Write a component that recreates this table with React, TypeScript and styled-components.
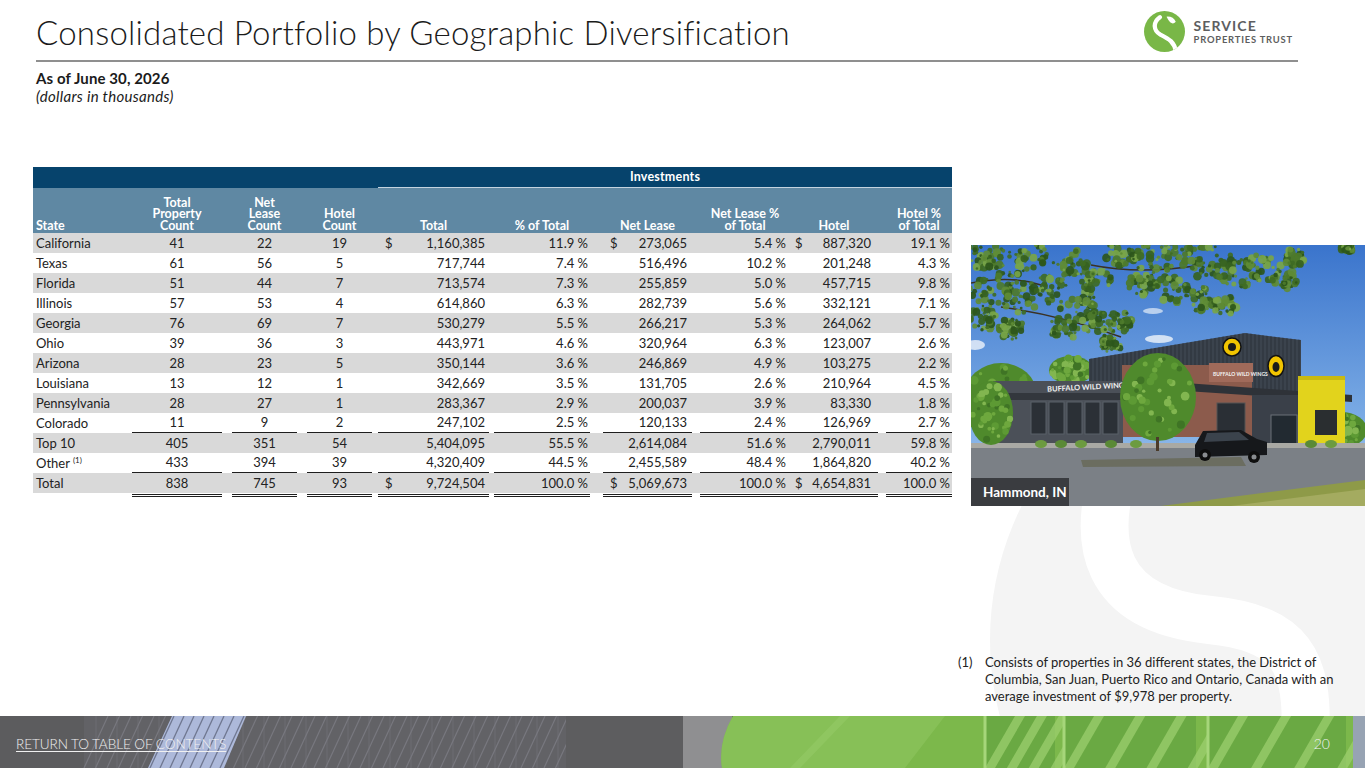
import React from "react";
import styled, { createGlobalStyle } from "styled-components";

const GlobalStyle = createGlobalStyle`
  html, body { margin: 0; padding: 0; background: #ffffff; }
  body { font-family: Lato, "Noto Sans", "Liberation Sans", sans-serif; color: #222; }
  * { box-sizing: border-box; }
`;

type Kind = "text" | "center" | "right" | "money";
type Col = { w: number; ml: number; mr: number; pl: number; pr: number; kind: Kind };

const COLS: Col[] = [
  { w: 97, ml: 0, mr: 0, pl: 3, pr: 0, kind: "text" },
  { w: 97, ml: 2, mr: 5, pl: 0, pr: 0, kind: "center" },
  { w: 75, ml: 5, mr: 5, pl: 0, pr: 0, kind: "center" },
  { w: 73, ml: 5, mr: 3, pl: 0, pr: 0, kind: "center" },
  { w: 116.5, ml: 3, mr: 2.5, pl: 7, pr: 4, kind: "money" },
  { w: 105, ml: 2.5, mr: 6.5, pl: 0, pr: 2, kind: "right" },
  { w: 99.5, ml: 6.5, mr: 4, pl: 7, pr: 5, kind: "money" },
  { w: 94, ml: 4, mr: 0, pl: 0, pr: 4, kind: "right" },
  { w: 92, ml: 0, mr: 4, pl: 5, pr: 7, kind: "money" },
  { w: 70, ml: 4, mr: 0, pl: 0, pr: 2, kind: "right" },
];
const TEMPLATE = COLS.map((c) => `${c.w}px`).join(" ");

const HEADERS = [
  "State",
  "Total\nProperty\nCount",
  "Net\nLease\nCount",
  "Hotel\nCount",
  "Total",
  "% of Total",
  "Net Lease",
  "Net Lease %\nof Total",
  "Hotel",
  "Hotel %\nof Total",
];

type RowData = { name: string; sup?: string; v: string[]; dollar?: boolean; line: "none" | "single" | "double" };

const ROWS: RowData[] = [
  { name: "California", v: ["41", "22", "19", "1,160,385", "11.9 %", "273,065", "5.4 %", "887,320", "19.1 %"], dollar: true, line: "none" },
  { name: "Texas", v: ["61", "56", "5", "717,744", "7.4 %", "516,496", "10.2 %", "201,248", "4.3 %"], line: "none" },
  { name: "Florida", v: ["51", "44", "7", "713,574", "7.3 %", "255,859", "5.0 %", "457,715", "9.8 %"], line: "none" },
  { name: "Illinois", v: ["57", "53", "4", "614,860", "6.3 %", "282,739", "5.6 %", "332,121", "7.1 %"], line: "none" },
  { name: "Georgia", v: ["76", "69", "7", "530,279", "5.5 %", "266,217", "5.3 %", "264,062", "5.7 %"], line: "none" },
  { name: "Ohio", v: ["39", "36", "3", "443,971", "4.6 %", "320,964", "6.3 %", "123,007", "2.6 %"], line: "none" },
  { name: "Arizona", v: ["28", "23", "5", "350,144", "3.6 %", "246,869", "4.9 %", "103,275", "2.2 %"], line: "none" },
  { name: "Louisiana", v: ["13", "12", "1", "342,669", "3.5 %", "131,705", "2.6 %", "210,964", "4.5 %"], line: "none" },
  { name: "Pennsylvania", v: ["28", "27", "1", "283,367", "2.9 %", "200,037", "3.9 %", "83,330", "1.8 %"], line: "none" },
  { name: "Colorado", v: ["11", "9", "2", "247,102", "2.5 %", "120,133", "2.4 %", "126,969", "2.7 %"], line: "single" },
  { name: "Top 10", v: ["405", "351", "54", "5,404,095", "55.5 %", "2,614,084", "51.6 %", "2,790,011", "59.8 %"], line: "none" },
  { name: "Other", sup: "(1)", v: ["433", "394", "39", "4,320,409", "44.5 %", "2,455,589", "48.4 %", "1,864,820", "40.2 %"], line: "single" },
  { name: "Total", v: ["838", "745", "93", "9,724,504", "100.0 %", "5,069,673", "100.0 %", "4,654,831", "100.0 %"], dollar: true, line: "double" },
];

/* ---------- page ---------- */

const Page = styled.div`
  position: relative;
  z-index: 0;
  width: 1365px;
  height: 768px;
  overflow: hidden;
  background: #fff;
  display: flex;
  flex-direction: column;
`;

const Watermark = styled.svg`
  position: absolute;
  z-index: -1;
  left: 960px;
  top: 320px;
  width: 680px;
  height: 680px;
`;

const TitleBar = styled.header`
  display: flex;
  justify-content: space-between;
  align-items: flex-start;
  padding: 12px 72px 0 36px;
`;

const Title = styled.h1`
  margin: 0;
  font-family: Lato, "Noto Sans", sans-serif;
  font-weight: 300;
  font-size: 33px;
  line-height: 40px;
  color: #1b1b1b;
  letter-spacing: 0.2px;
`;

const Logo = styled.div`
  display: flex;
  align-items: center;
  gap: 9px;
  margin-top: -1px;
`;

const LogoMark = styled.svg`
  width: 41px;
  height: 41px;
  display: block;
`;

const LogoText = styled.div`
  display: flex;
  flex-direction: column;
  color: #5d5e60;
  font-family: Lato, "Noto Sans", sans-serif;
  font-weight: 700;
  margin-top: 1px;
`;

const LogoLine1 = styled.span`
  font-size: 14px;
  line-height: 14px;
  letter-spacing: 1.1px;
`;

const LogoLine2 = styled.span`
  font-size: 9.4px;
  line-height: 13px;
  letter-spacing: 0.8px;
`;

const Rule = styled.div`
  height: 2px;
  margin: 8px 67px 0 36px;
  background: #8f8f8f;
`;

const Sub = styled.div`
  padding: 8px 0 0 36px;
  font-size: 15px;
  line-height: 17.5px;
  color: #1b1b1b;
`;

const AsOf = styled.div`
  font-weight: 700;
  letter-spacing: 0.1px;
`;

const Units = styled.div`
  font-style: italic;
  letter-spacing: 0.3px;
`;

const Main = styled.main`
  flex: 1;
  display: flex;
  min-height: 0;
`;

const TableWrap = styled.section`
  width: 919px;
  margin-left: 33px;
  padding-top: 62px;
  font-size: 13px;
  color: #222;
`;

const GridRow = styled.div`
  display: grid;
  grid-template-columns: ${TEMPLATE};
`;

const HeadTop = styled(GridRow)`
  height: 21px;
  background: #06436c;
`;

const Investments = styled.div`
  grid-column: 5 / 11;
  margin-left: 3px;
  height: 21px;
  border-bottom: 1px solid #c3d3df;
  color: #fff;
  font-weight: 700;
  font-size: 12.5px;
  line-height: 20px;
  letter-spacing: 0.2px;
  text-align: center;
`;

const HeadRow = styled(GridRow)`
  height: 45px;
  background: #5f88a3;
`;

const HeadCell = styled.div<{ $ml: number; $mr: number; $pl: number; $left: boolean }>`
  align-self: end;
  margin: 0 ${(p) => p.$mr}px 0 ${(p) => p.$ml}px;
  padding: 0 0 2px ${(p) => p.$pl}px;
  color: #fff;
  font-weight: 700;
  font-size: 12.5px;
  line-height: 11.5px;
  white-space: pre-line;
  text-align: ${(p) => (p.$left ? "left" : "center")};
`;

const BodyRow = styled(GridRow)<{ $shade: boolean; $tall: boolean }>`
  height: ${(p) => (p.$tall ? 24 : 20)}px;
  background: ${(p) => (p.$shade ? "linear-gradient(#d9d9d9, #d9d9d9) 0 0 / 100% 20px no-repeat" : "transparent")};
`;

const Cell = styled.div<{
  $ml: number;
  $mr: number;
  $pl: number;
  $pr: number;
  $kind: Kind;
  $line: "none" | "single" | "double";
  $tall: boolean;
}>`
  display: flex;
  align-items: center;
  justify-content: ${(p) =>
    p.$kind === "text" ? "flex-start" : p.$kind === "center" ? "center" : p.$kind === "money" ? "space-between" : "flex-end"};
  margin: 0 ${(p) => p.$mr}px 0 ${(p) => p.$ml}px;
  padding: 0 ${(p) => p.$pr}px ${(p) => (p.$tall ? (p.$line === "double" ? 1 : 4) : 0)}px ${(p) => p.$pl}px;
  height: ${(p) => (p.$tall ? 24 : 20)}px;
  border-bottom: ${(p) =>
    p.$line === "single" ? "1px solid #1e1e1e" : p.$line === "double" ? "3px double #1e1e1e" : "0"};
  white-space: nowrap;
  line-height: 19px;
`;

const Sup = styled.sup`
  font-size: 8px;
  line-height: 0;
  margin-left: 3px;
  vertical-align: 5px;
`;

const Aside = styled.aside`
  flex: 1;
  margin-left: 6px;
  display: flex;
  flex-direction: column;
  padding-top: 140px;
  padding-bottom: 11px;
`;

const Photo = styled.div`
  position: relative;
  margin-left: 13px;
  height: 261px;
  overflow: hidden;
`;

const PhotoArt = styled.svg`
  display: block;
  width: 100%;
  height: 100%;
`;

const PhotoLabel = styled.div`
  position: absolute;
  left: 0;
  bottom: 0;
  width: 98px;
  height: 28px;
  background: rgba(52, 54, 59, 0.92);
  color: #fff;
  font-weight: 700;
  font-size: 13.5px;
  line-height: 28px;
  padding-left: 12px;
`;

const Footnote = styled.div`
  margin-top: auto;
  display: flex;
  font-size: 13px;
  line-height: 17px;
  color: #222;
`;

const NoteNum = styled.span`
  width: 27px;
  flex: none;
`;

const NoteText = styled.span`
  max-width: 362px;
`;

const Footer = styled.footer`
  position: relative;
  height: 52px;
  flex: none;
  display: flex;
  align-items: center;
  justify-content: space-between;
  padding: 3px 35px 0 16px;
`;

const FooterArt = styled.svg`
  position: absolute;
  inset: 0;
  width: 100%;
  height: 100%;
  z-index: 0;
`;

const FooterLink = styled.a`
  position: relative;
  z-index: 1;
  color: #f0f0f0;
  font-size: 13.6px;
  font-weight: 300;
  text-decoration: underline;
  text-underline-offset: 2px;
  letter-spacing: -0.1px;
`;

const PageNum = styled.span`
  position: relative;
  z-index: 1;
  color: #f4f4f4;
  font-size: 14px;
  font-weight: 300;
`;

/* ---------- drawings ---------- */

function rand(seed: number) {
  let s = seed;
  return () => {
    s = (s * 9301 + 49297) % 233280;
    return s / 233280;
  };
}

const CANOPY: [number, number, number][] = [
  [8, 8, 20], [34, 18, 22], [62, 12, 18], [18, 44, 22], [50, 52, 20], [80, 44, 18], [108, 60, 20],
  [128, 80, 18], [148, 76, 14], [92, 84, 15], [40, 84, 14], [12, 74, 14], [100, 18, 18], [126, 36, 16],
  [150, 8, 16], [180, 14, 22], [210, 8, 20], [240, 18, 22], [266, 28, 20], [292, 22, 18], [312, 34, 14],
  [200, 44, 18], [230, 54, 15], [254, 60, 12], [170, 40, 14], [322, 12, 12], [376, 3, 6], [140, 100, 10],
];
const LEAF = ["#2d561b", "#36621f", "#3f6b24", "#4d7a2b", "#5f8c36", "#78a548"];

function Canopy() {
  const r = rand(7);
  const out: React.ReactNode[] = [];
  CANOPY.forEach(([cx, cy, rad], i) => {
    for (let k = 0; k < 34; k++) {
      const a = r() * Math.PI * 2;
      const d = Math.sqrt(r()) * rad;
      out.push(
        <circle
          key={`${i}-${k}`}
          cx={cx + Math.cos(a) * d}
          cy={cy + Math.sin(a) * d * 0.8}
          r={1.2 + r() * 3.2}
          fill={LEAF[Math.floor(r() * LEAF.length)]}
          opacity={0.92}
        />
      );
    }
  });
  return <g>{out}</g>;
}

function Bush({ cx, cy, rx, ry, seed }: { cx: number; cy: number; rx: number; ry: number; seed: number }) {
  const r = rand(seed);
  const out: React.ReactNode[] = [];
  out.push(<ellipse key="b" cx={cx} cy={cy} rx={rx} ry={ry} fill="#4f8a2c" />);
  for (let k = 0; k < 40; k++) {
    const a = r() * Math.PI * 2;
    const d = Math.sqrt(r());
    out.push(
      <circle
        key={k}
        cx={cx + Math.cos(a) * d * rx * 0.9}
        cy={cy + Math.sin(a) * d * ry * 0.9}
        r={1.5 + r() * 3}
        fill={["#5d9a34", "#6ea83e", "#3f7425", "#82b650"][Math.floor(r() * 4)]}
      />
    );
  }
  return <g>{out}</g>;
}

function PhotoDrawing() {
  const stripes: React.ReactNode[] = [];
  for (let x = 120; x < 330; x += 4) {
    stripes.push(<line key={x} x1={x} y1={80} x2={x} y2={165} stroke="#2c333b" strokeWidth={1} />);
  }
  const mullions: React.ReactNode[] = [];
  for (let x = 60; x < 150; x += 18) {
    mullions.push(<rect key={x} x={x} y={157} width={15} height={32} fill="#2b3036" stroke="#5a6068" strokeWidth={1} />);
  }
  return (
    <PhotoArt viewBox="0 0 394 261" preserveAspectRatio="none">
      <defs>
        <linearGradient id="sky" x1="0" y1="0" x2="0" y2="1">
          <stop offset="0" stopColor="#3a74cc" />
          <stop offset="0.7" stopColor="#7eaee6" />
          <stop offset="1" stopColor="#b4d0ee" />
        </linearGradient>
        <clipPath id="metal">
          <polygon points="118,114 274,88 330,95 330,165 118,165" />
        </clipPath>
      </defs>
      <rect width="394" height="261" fill="url(#sky)" />
      <ellipse cx="188" cy="94" rx="14" ry="4" fill="#e6eef8" opacity="0.85" />
      <ellipse cx="4" cy="100" rx="10" ry="5" fill="#eef3fa" opacity="0.8" />
      <ellipse cx="182" cy="66" rx="10" ry="3" fill="#e6eef8" opacity="0.7" />
      {/* background trees */}
      <Bush cx={30} cy={150} rx={36} ry={32} seed={3} />
      <Bush cx={100} cy={125} rx={22} ry={14} seed={5} />
      <Bush cx={370} cy={185} rx={26} ry={18} seed={11} />
      {/* metal facade */}
      <polygon points="118,114 274,88 330,95 330,165 118,165" fill="#3b434d" />
      <g clipPath="url(#metal)">{stripes}</g>
      {/* brick */}
      <rect x="151" y="120" width="130" height="72" fill="#8c5b4c" />
      <rect x="238" y="118" width="44" height="19" fill="#a06a5a" />
      <text x="242" y="131" fontSize="5" fontWeight="700" fill="#f4f4f4" fontFamily="Lato, sans-serif">
        BUFFALO WILD WINGS
      </text>
      {/* lower left building */}
      <rect x="22" y="136" width="130" height="66" fill="#4b5058" />
      <rect x="22" y="148" width="150" height="7" fill="#33373d" />
      {mullions}
      <text x="76" y="145" fontSize="7.4" fontWeight="700" fill="#f2f2f2" fontFamily="Lato, sans-serif" transform="rotate(-3 110 140)">
        BUFFALO WILD WINGS
      </text>
      <polygon points="200,137 381,150 381,157 200,145" fill="#2e3238" />
      <rect x="246" y="158" width="28" height="30" fill="#2a2f35" stroke="#555" strokeWidth="1" />
      <rect x="281" y="150" width="49" height="54" fill="#3a4049" />
      <rect x="300" y="170" width="26" height="34" fill="#222a31" stroke="#6b7078" strokeWidth="1" />
      {/* yellow */}
      <rect x="327" y="131" width="47" height="71" fill="#e2d31c" />
      <rect x="327" y="131" width="47" height="4" fill="#c9ba10" />
      <rect x="344" y="165" width="22" height="25" fill="#2a2e30" />
      {/* logos */}
      <circle cx="261" cy="102" r="9" fill="#f1c400" stroke="#111" strokeWidth="1.5" />
      <circle cx="261" cy="102" r="4" fill="#1a1a1a" />
      <ellipse cx="305" cy="121" rx="8" ry="10.5" fill="#f1c400" stroke="#111" strokeWidth="1.5" />
      <ellipse cx="305" cy="122" rx="3.5" ry="5" fill="#1a1a1a" />
      {/* ground */}
      <rect x="0" y="199" width="394" height="62" fill="#7b8086" />
      <rect x="0" y="198" width="394" height="5" fill="#a9a9a4" />
      <polygon points="110,215 270,212 275,221 112,222" fill="#6b6d60" />
      <polygon points="190,261 394,235 394,261" fill="#8e9a48" />
      <polygon points="260,261 394,244 394,261" fill="#a4ab60" />
      {/* shrubs */}
      {[70, 90, 110, 140, 165, 340, 360].map((x, i) => (
        <ellipse key={x} cx={x} cy={199} rx={6} ry={4} fill={i % 2 ? "#5a8a36" : "#6c9b40"} />
      ))}
      {/* trees */}
      <Bush cx={20} cy={168} rx={22} ry={32} seed={17} />
      <Bush cx={187} cy={152} rx={38} ry={44} seed={23} />
      <rect x="185" y="192" width="3" height="14" fill="#4a3b2a" />
      {/* car */}
      <path d="M224 200 L232 186 L270 185 L286 194 L296 197 L296 210 L224 212 Z" fill="#16181b" />
      <path d="M236 188 L268 187 L278 195 L233 197 Z" fill="#3b434c" />
      <circle cx="234" cy="210" r="6" fill="#0e0e0e" />
      <circle cx="234" cy="210" r="2.5" fill="#8a8d90" />
      <circle cx="283" cy="212" r="6" fill="#0e0e0e" />
      <circle cx="283" cy="212" r="2.5" fill="#8a8d90" />
      {/* foreground canopy */}
      <path d="M0 38 Q40 30 70 40 M30 62 Q90 70 150 92 M120 20 Q170 30 230 20" stroke="#3a3224" strokeWidth="1.5" fill="none" />
      <Canopy />
    </PhotoArt>
  );
}

function FooterDrawing() {
  const diag: React.ReactNode[] = [];
  for (let i = 0; i < 42; i++) {
    const x = 84 + i * 11.5;
    diag.push(<line key={`d${i}`} x1={x} y1={52} x2={x + 24} y2={0} stroke="#78787f" strokeWidth={1.2} />);
  }
  const verts: React.ReactNode[] = [];
  for (let x = 96; x < 560; x += 21) {
    verts.push(<line key={`v${x}`} x1={x} y1={0} x2={x} y2={52} stroke="#6c6c72" strokeWidth={1} />);
  }
  const glassLines: React.ReactNode[] = [];
  for (let i = 0; i < 8; i++) {
    const x = 150 + i * 10;
    glassLines.push(<line key={`g${i}`} x1={x} y1={52} x2={x + 24} y2={0} stroke="#6f7790" strokeWidth={1.3} />);
  }
  const windows: React.ReactNode[] = [];
  [
    [985, 70],
    [1064, 132],
    [1208, 138],
  ].forEach(([x, w], i) => {
    windows.push(<rect key={`w${i}`} x={x} y={0} width={w} height={52} fill="#6aa943" />);
    for (let k = 0; k < 4; k++) {
      const sx = x + k * (w / 3.2);
      windows.push(
        <polygon
          key={`s${i}-${k}`}
          points={`${sx},52 ${sx + 10},52 ${sx + 40},0 ${sx + 30},0`}
          fill="#9ccf6d"
          opacity={0.75}
        />
      );
    }
    windows.push(<line key={`m${i}`} x1={x} y1={0} x2={x} y2={52} stroke="#a6d67a" strokeWidth={3} />);
  });
  return (
    <FooterArt viewBox="0 0 1365 52" preserveAspectRatio="none">
      <rect width="1365" height="52" fill="#5c5c5e" />
      <rect x="84" width="482" height="52" fill="#626266" />
      {verts}
      {diag}
      <polygon points="148,52 172,0 246,0 224,52" fill="#adb9da" />
      {glassLines}
      <rect x="566" width="117" height="52" fill="#5d5d5f" />
      <rect x="683" width="49" height="52" fill="#8f8f91" />
      <path d="M733 0 Q718 26 722 52 L1353 52 L1353 0 Z" fill="#7cb84b" />
      <path d="M733 0 Q718 26 722 52 L905 52 L945 0 Z" fill="#8ac25a" opacity="0.8" />
      <polygon points="790,52 800,52 850,0 840,0" fill="#98cb69" opacity="0.5" />
      {windows}
      <rect x="1353" width="12" height="52" fill="#97a3b3" />
    </FooterArt>
  );
}

/* ---------- app ---------- */

export default function App() {
  return (
    <>
      <GlobalStyle />
      <Page>
        <Watermark viewBox="0 0 680 680">
          <circle cx="330" cy="320" r="300" fill="#f4f4f4" />
          <path d="M165 120 C120 230 150 290 250 300 C330 308 350 340 345 420" stroke="#ffffff" strokeWidth="48" fill="none" />
        </Watermark>

        <TitleBar>
          <Title>Consolidated Portfolio by Geographic Diversification</Title>
          <Logo>
            <LogoMark viewBox="0 0 40 40">
              <defs>
                <clipPath id="logoClip">
                  <circle cx="20" cy="20" r="20" />
                </clipPath>
              </defs>
              <circle cx="20" cy="20" r="20" fill="#79b747" />
              <g clipPath="url(#logoClip)">
                <path d="M15.5 6 C8.5 11 9 19 16 23 C24 27 30 30 31.5 41" stroke="#fff" strokeWidth="4.2" fill="none" strokeLinecap="round" />
                <path d="M22 5.5 Q28.5 5 31 10.5 Q28.5 13.5 25.5 11 Q23.5 8.5 22 5.5 Z" fill="#fff" />
              </g>
            </LogoMark>
            <LogoText>
              <LogoLine1>SERVICE</LogoLine1>
              <LogoLine2>PROPERTIES TRUST</LogoLine2>
            </LogoText>
          </Logo>
        </TitleBar>
        <Rule />
        <Sub>
          <AsOf>As of June 30, 2026</AsOf>
          <Units>(dollars in thousands)</Units>
        </Sub>

        <Main>
          <TableWrap>
            <HeadTop>
              <Investments>Investments</Investments>
            </HeadTop>
            <HeadRow>
              {HEADERS.map((h, i) => (
                <HeadCell key={h} $ml={COLS[i].ml} $mr={COLS[i].mr} $pl={i === 0 ? 3 : 0} $left={i === 0}>
                  {h}
                </HeadCell>
              ))}
            </HeadRow>
            {ROWS.map((row, ri) => {
              const tall = row.line === "double";
              return (
                <BodyRow key={row.name} $shade={ri % 2 === 0} $tall={tall}>
                  {COLS.map((c, ci) => {
                    const line = ci === 0 ? "none" : row.line;
                    let content: React.ReactNode;
                    if (ci === 0) {
                      content = (
                        <span>
                          {row.name}
                          {row.sup && <Sup>{row.sup}</Sup>}
                        </span>
                      );
                    } else if (c.kind === "money") {
                      content = (
                        <>
                          <span>{row.dollar ? "$" : ""}</span>
                          <span>{row.v[ci - 1]}</span>
                        </>
                      );
                    } else {
                      content = row.v[ci - 1];
                    }
                    return (
                      <Cell
                        key={ci}
                        $ml={c.ml}
                        $mr={c.mr}
                        $pl={c.pl}
                        $pr={c.pr}
                        $kind={c.kind}
                        $line={line}
                        $tall={tall}
                      >
                        {content}
                      </Cell>
                    );
                  })}
                </BodyRow>
              );
            })}
          </TableWrap>

          <Aside>
            <Photo>
              <PhotoDrawing />
              <PhotoLabel>Hammond, IN</PhotoLabel>
            </Photo>
            <Footnote>
              <NoteNum>(1)</NoteNum>
              <NoteText>
                Consists of properties in 36 different states, the District of Columbia, San Juan, Puerto Rico and
                Ontario, Canada with an average investment of $9,978 per property.
              </NoteText>
            </Footnote>
          </Aside>
        </Main>

        <Footer>
          <FooterDrawing />
          <FooterLink href="#">RETURN TO TABLE OF CONTENTS</FooterLink>
          <PageNum>20</PageNum>
        </Footer>
      </Page>
    </>
  );
}
